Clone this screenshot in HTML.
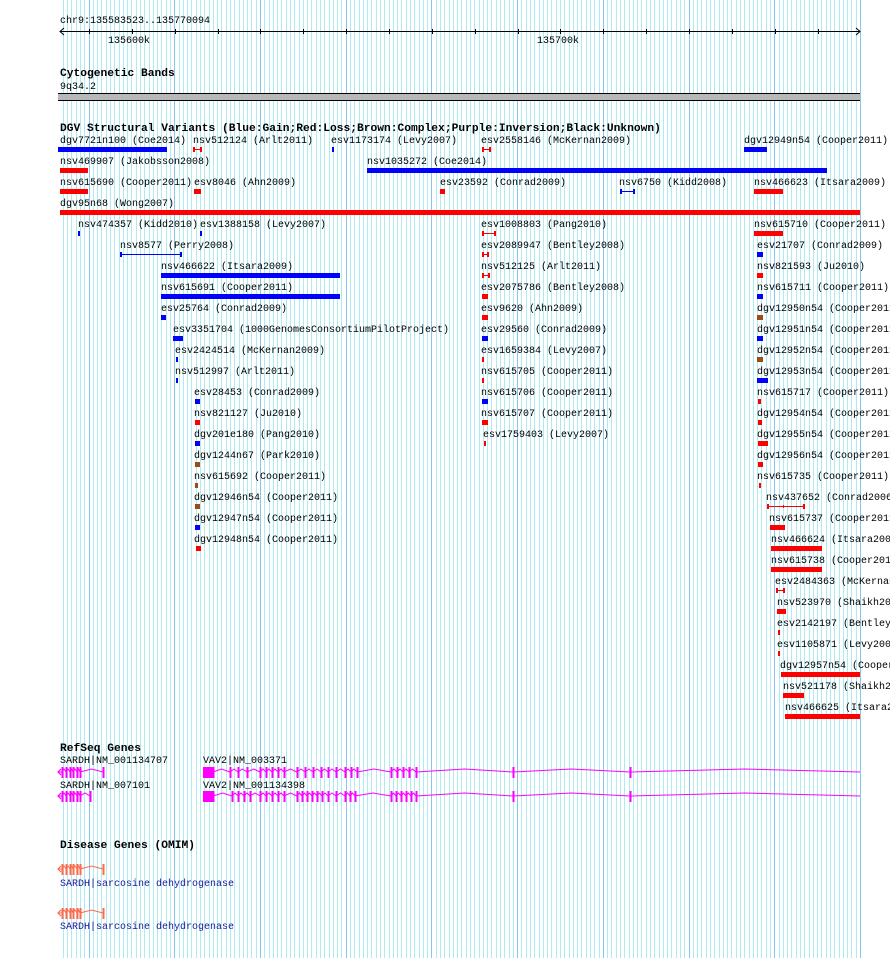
<!DOCTYPE html>
<html><head><meta charset="utf-8">
<style>
html,body{margin:0;padding:0;background:#fff;}
body{width:890px;height:958px;position:relative;overflow:hidden;font-family:"Liberation Mono","DejaVu Sans Mono",monospace;font-size:10px;color:#000;}
.t{position:absolute;white-space:nowrap;line-height:10px;font-size:10px;}
.b{position:absolute;white-space:nowrap;line-height:12px;font-size:11.25px;font-weight:bold;}
svg{position:absolute;left:0;top:0;}
</style></head><body>
<svg id="g" width="890" height="958"></svg>
<svg id="f" width="890" height="958"></svg>
<div class="t" style="left:60px;top:17px">chr9:135583523..135770094</div>
<div class="t" style="left:108px;top:37px">135600k</div>
<div class="t" style="left:537px;top:37px">135700k</div>
<div class="b" style="left:60px;top:68px">Cytogenetic Bands</div>
<div class="t" style="left:60px;top:83px">9q34.2</div>
<div class="b" style="left:60px;top:123px">DGV Structural Variants (Blue:Gain;Red:Loss;Brown:Complex;Purple:Inversion;Black:Unknown)</div>
<div id="labels"></div>
<div class="b" style="left:60px;top:743px">RefSeq Genes</div>
<div class="t" style="left:60px;top:757px">SARDH|NM_001134707</div>
<div class="t" style="left:203px;top:757px">VAV2|NM_003371</div>
<div class="t" style="left:60px;top:782px">SARDH|NM_007101</div>
<div class="t" style="left:203px;top:782px">VAV2|NM_001134398</div>
<div class="b" style="left:60px;top:840px">Disease Genes (OMIM)</div>
<div class="t" style="left:60px;top:880px;color:#1a1a9a">SARDH|sarcosine dehydrogenase</div>
<div class="t" style="left:60px;top:923px;color:#1a1a9a">SARDH|sarcosine dehydrogenase</div>
<script>
var NS="http://www.w3.org/2000/svg";
var g=document.getElementById('g'),f=document.getElementById('f');
function el(p,n,a){var e=document.createElementNS(NS,n);for(var k in a)e.setAttribute(k,a[k]);p.appendChild(e);return e;}
for(var i=0;;i++){var x=860-4.2857*i;if(x<59.5)break;x=Math.round(x)+0.5;
 el(g,'line',{x1:x,y1:0,x2:x,y2:958,stroke:(i%20==0)?'#8cc4ec':'#aeeaf0','stroke-width':1});}
el(f,'line',{x1:60,y1:31.5,x2:860,y2:31.5,stroke:'#000'});
el(f,'polyline',{points:'64,28 60,31.5 64,35',fill:'none',stroke:'#000'});
el(f,'polyline',{points:'856,28 860,31.5 856,35',fill:'none',stroke:'#000'});
for(var x=89;x<858;x+=42.86){var xx=Math.round(x)+0.5;el(f,'line',{x1:xx,y1:29,x2:xx,y2:34,stroke:'#000'});}
el(f,'rect',{x:58,y:93,width:802,height:1,fill:'#000'});
el(f,'rect',{x:58,y:94,width:802,height:6,fill:'#b8b8b8'});
el(f,'rect',{x:58,y:100,width:802,height:1,fill:'#000'});
var C={B:'#0000ff',R:'#ff0000',N:'#994d1a'};
var D=[
[[60,'dgv7721n100 (Coe2014)',58,109,'B'],[193,'nsv512124 (Arlt2011)',193,9,'R','h'],[331,'esv1173174 (Levy2007)',332,2,'B'],[481,'esv2558146 (McKernan2009)',482,9,'R','h'],[744,'dgv12949n54 (Cooper2011)',744,23,'B']],
[[60,'nsv469907 (Jakobsson2008)',60,28,'R'],[367,'nsv1035272 (Coe2014)',367,460,'B']],
[[60,'nsv615690 (Cooper2011)',60,28,'R'],[194,'esv8046 (Ahn2009)',194,7,'R'],[440,'esv23592 (Conrad2009)',440,5,'R'],[619,'nsv6750 (Kidd2008)',620,15,'B','h'],[754,'nsv466623 (Itsara2009)',754,29,'R']],
[[60,'dgv95n68 (Wong2007)',60,800,'R']],
[[78,'nsv474357 (Kidd2010)',78,2,'B'],[200,'esv1388158 (Levy2007)',200,2,'B'],[481,'esv1008803 (Pang2010)',482,14,'R','h'],[754,'nsv615710 (Cooper2011)',754,29,'R']],
[[120,'nsv8577 (Perry2008)',120,62,'B','h'],[481,'esv2089947 (Bentley2008)',482,7,'R','h'],[757,'esv21707 (Conrad2009)',757,6,'B']],
[[161,'nsv466622 (Itsara2009)',161,179,'B'],[481,'nsv512125 (Arlt2011)',482,8,'R','h'],[757,'nsv821593 (Ju2010)',757,6,'R']],
[[161,'nsv615691 (Cooper2011)',161,179,'B'],[481,'esv2075786 (Bentley2008)',482,6,'R'],[757,'nsv615711 (Cooper2011)',757,6,'B']],
[[161,'esv25764 (Conrad2009)',161,5,'B'],[481,'esv9620 (Ahn2009)',482,6,'R'],[757,'dgv12950n54 (Cooper2011)',757,6,'N']],
[[173,'esv3351704 (1000GenomesConsortiumPilotProject)',173,10,'B'],[481,'esv29560 (Conrad2009)',482,6,'B'],[757,'dgv12951n54 (Cooper2011)',757,6,'B']],
[[175,'esv2424514 (McKernan2009)',176,2,'B'],[481,'esv1659384 (Levy2007)',482,2,'R'],[757,'dgv12952n54 (Cooper2011)',757,6,'N']],
[[175,'nsv512997 (Arlt2011)',176,2,'B'],[481,'nsv615705 (Cooper2011)',482,2,'R'],[757,'dgv12953n54 (Cooper2011)',757,11,'B']],
[[194,'esv28453 (Conrad2009)',195,5,'B'],[481,'nsv615706 (Cooper2011)',482,6,'B'],[757,'nsv615717 (Cooper2011)',758,3,'R']],
[[194,'nsv821127 (Ju2010)',195,5,'R'],[481,'nsv615707 (Cooper2011)',482,6,'R'],[757,'dgv12954n54 (Cooper2011)',758,4,'R']],
[[194,'dgv201e180 (Pang2010)',195,5,'B'],[483,'esv1759403 (Levy2007)',484,2,'R'],[757,'dgv12955n54 (Cooper2011)',758,10,'R']],
[[194,'dgv1244n67 (Park2010)',195,5,'N'],[757,'dgv12956n54 (Cooper2011)',758,5,'R']],
[[194,'nsv615692 (Cooper2011)',195,3,'N'],[757,'nsv615735 (Cooper2011)',759,2,'R']],
[[194,'dgv12946n54 (Cooper2011)',195,5,'N'],[766,'nsv437652 (Conrad2006)',767,38,'R','h2']],
[[194,'dgv12947n54 (Cooper2011)',195,5,'B'],[769,'nsv615737 (Cooper2011)',770,15,'R']],
[[194,'dgv12948n54 (Cooper2011)',196,5,'R'],[771,'nsv466624 (Itsara2009)',771,51,'R']],
[[771,'nsv615738 (Cooper2011)',771,51,'R']],
[[775,'esv2484363 (McKernan2009)',776,9,'R','h']],
[[777,'nsv523970 (Shaikh2009)',777,9,'R']],
[[777,'esv2142197 (Bentley2008)',778,2,'R']],
[[777,'esv1105871 (Levy2007)',778,2,'R']],
[[780,'dgv12957n54 (Cooper2011)',781,79,'R']],
[[783,'nsv521178 (Shaikh2009)',783,21,'R']],
[[785,'nsv466625 (Itsara2009)',785,75,'R']]
];
var L=document.getElementById('labels'),h='';
D.forEach(function(row,r){row.forEach(function(it){
 h+='<div class="t" style="left:'+it[0]+'px;top:'+(137+21*r)+'px">'+it[1]+'</div>';
 var y=147+21*r,c=C[it[4]];
 if(it[5]){var m=y+2.5,x1=it[2]+0.5,x2=it[2]+it[3]-0.5;
  el(f,'line',{x1:x1,y1:m,x2:x2,y2:m,stroke:c});
  el(f,'rect',{x:it[2],y:y,width:2,height:5,fill:c});
  el(f,'rect',{x:it[2]+it[3]-2,y:y,width:2,height:5,fill:c});
  if(it[5]=='h2')el(f,'line',{x1:x1+16,y1:y+1,x2:x1+16,y2:y+4,stroke:c});
 } else el(f,'rect',{x:it[2],y:y,width:it[3],height:5,fill:c});
});});
L.innerHTML=h;
function gene(y,ex,col,endX,arrow,block){
 if(arrow){el(f,'polyline',{points:(ex[0]-1)+','+(y-3)+' '+(ex[0]-4)+','+y+' '+(ex[0]-1)+','+(y+3),fill:'none',stroke:col,'stroke-width':1.2});
  el(f,'line',{x1:ex[0]-4,y1:y,x2:ex[0],y2:y,stroke:col});}
 if(block)el(f,'rect',{x:block[0],y:y-5,width:block[1],height:11,fill:col});
 var all=ex.slice();if(endX)all.push(endX);
 for(var i=0;i<all.length-1;i++){var a=all[i],b=all[i+1];if(b-a<3)continue;
  var m=(a+b)/2;
  el(f,'polyline',{points:a+','+y+' '+m+','+(y-3)+' '+b+','+y,fill:'none',stroke:col});}
 ex.forEach(function(x){el(f,'rect',{x:x-0.5,y:y-5,width:2,height:11,fill:col});});
}
gene(772,[62,66,70,73,77,80,103],'#ff00ff',0,1);
gene(796,[62,66,70,73,77,80,90],'#ff00ff',0,1);
var v1=[213,230,238,247,260,266,272,278,284,297,305,313,321,328,336,345,351,357,391,397,403,409,416,513,630];
gene(772,v1,'#ff00ff',860,0,[203,10]);
var v2=[213,232,238,244,250,260,266,272,278,284,297,302,307,312,317,322,328,336,345,350,355,391,396,401,406,411,416,513,630];
gene(796,v2,'#ff00ff',860,0,[203,10]);
gene(869,[62,66,70,73,77,80,103],'#ff6a4a',0,1);
gene(913,[62,66,70,73,77,80,103],'#ff6a4a',0,1);
</script>
</body></html>
